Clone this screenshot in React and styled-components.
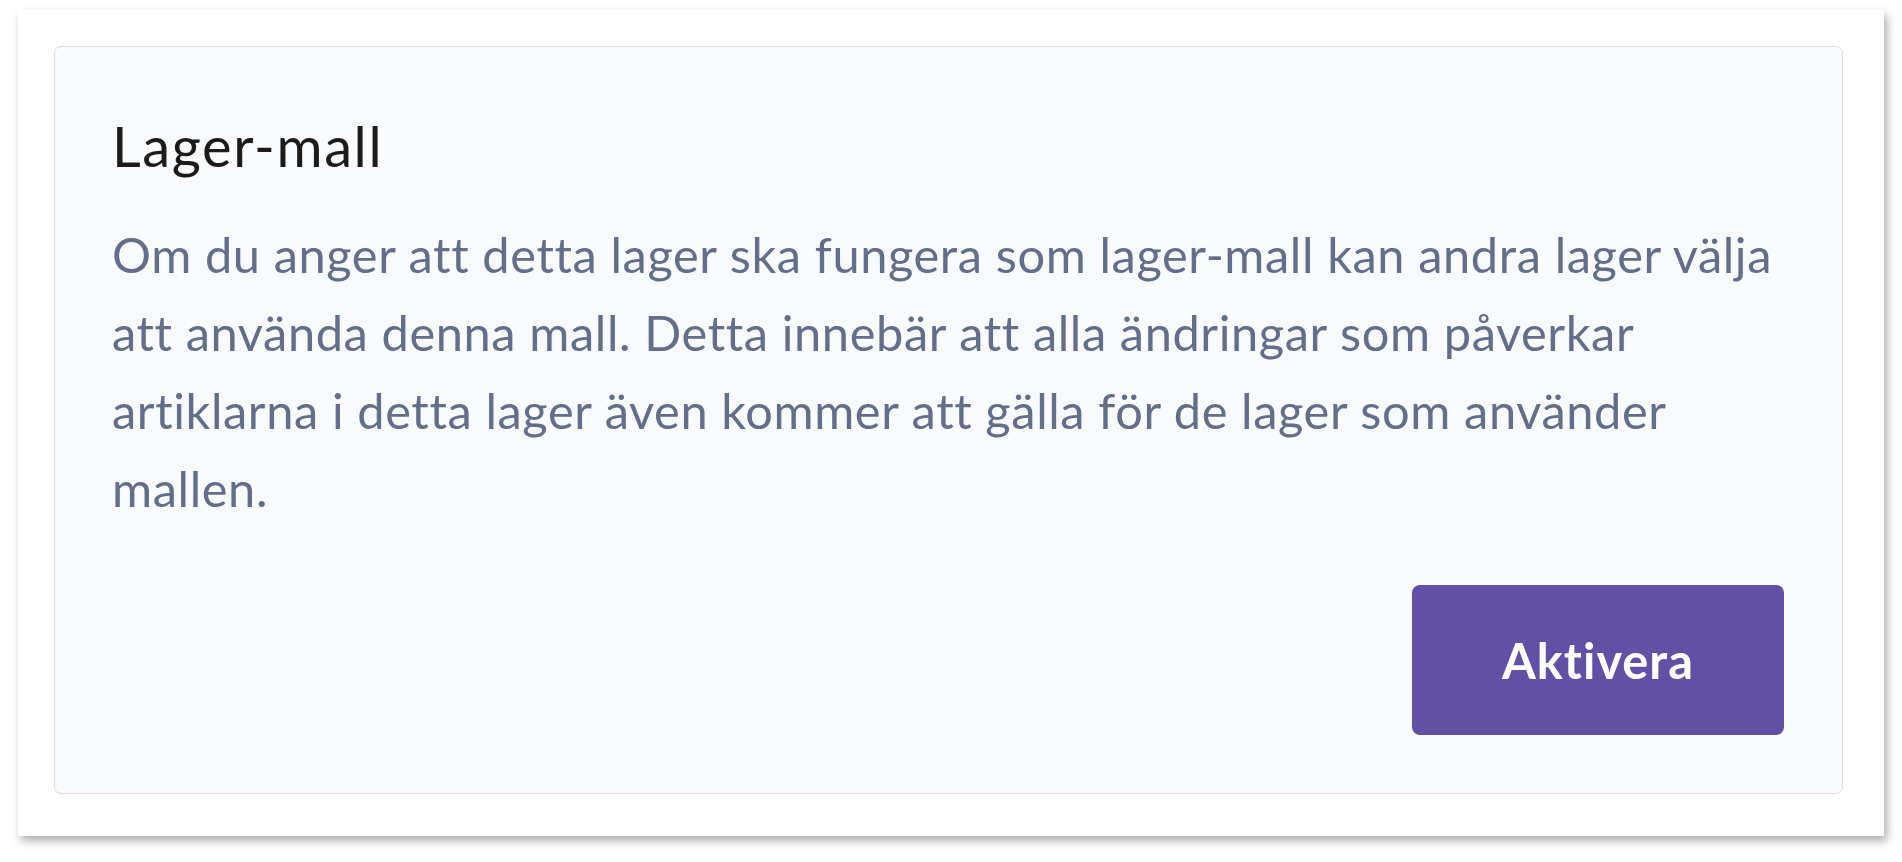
import React from 'react';
import styled, { createGlobalStyle } from 'styled-components';

const GlobalStyle = createGlobalStyle`
  html, body {
    margin: 0;
    background: #ffffff;
  }
  body {
    font-family: Lato, "Open Sans", sans-serif;
    font-variant-ligatures: none;
  }
`;

export default function App() {
  return (
    <>
      <GlobalStyle />
      <Page>
        <Sheet>
          <Panel>
            <Title>Lager-mall</Title>
            <Description>
              Om du anger att detta lager ska fungera som lager-mall kan andra lager välja
              att använda denna mall. Detta innebär att alla ändringar som påverkar
              artiklarna i detta lager även kommer att gälla för de lager som använder
              mallen.
            </Description>
            <Actions>
              <PrimaryButton type="button">Aktivera</PrimaryButton>
            </Actions>
          </Panel>
        </Sheet>
      </Page>
    </>
  );
}

const Page = styled.div`
  padding: 10px 18px 26px;
`;

const Sheet = styled.div`
  background: #ffffff;
  padding: 36px 41px 42px 36px;
  box-shadow: 3px 5px 9px rgba(0, 0, 0, 0.32);
`;

const Panel = styled.section`
  background: #f9fafb;
  border: 1px solid #dcdee2;
  border-radius: 7px;
  padding: 58px 58px 58px 57px;
`;

const Title = styled.h2`
  margin: 0 0 29px;
  font-size: 56px;
  line-height: 81px;
  font-weight: 400;
  letter-spacing: 1.6px;
  color: #1b1b1b;
`;

const Description = styled.p`
  margin: 0;
  font-size: 48.75px;
  line-height: 78px;
  letter-spacing: 0.6px;
  color: #636e8c;
`;

const Actions = styled.div`
  display: flex;
  justify-content: flex-end;
  margin-top: 58px;
`;

const PrimaryButton = styled.button`
  width: 372px;
  height: 150px;
  border: none;
  border-radius: 8px;
  background: #6250a6;
  color: #ffffff;
  font-family: Lato, sans-serif;
  font-variant-ligatures: none;
  font-size: 48.75px;
  font-weight: 700;
  letter-spacing: 1px;
  cursor: pointer;
`;
